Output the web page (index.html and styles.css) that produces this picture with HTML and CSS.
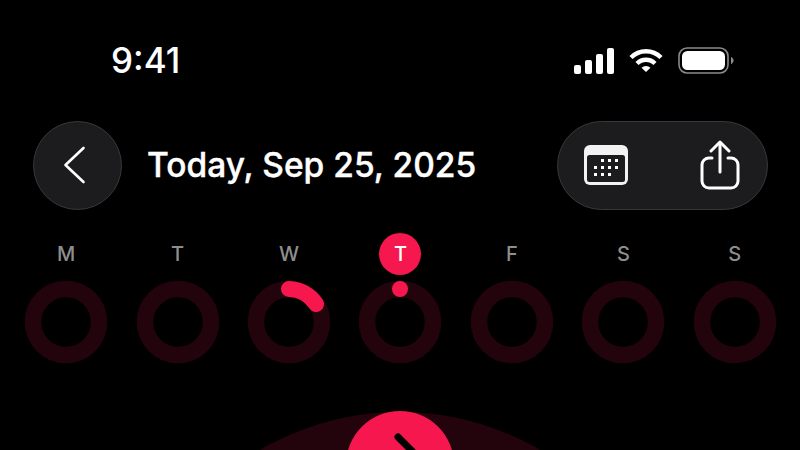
FILE: index.html
```html
<!DOCTYPE html>
<html>
<head>
<meta charset="utf-8">
<title>Today</title>
<link rel="stylesheet" href="styles.css">
</head>
<body>

<div class="status">
  <span class="time">9:41</span>
  <div class="status-icons">
    <svg width="40" height="26" viewBox="0 0 40 26" fill="#fff">
      <rect x="0" y="17" width="7" height="9" rx="2"/>
      <rect x="11" y="12" width="7" height="14" rx="2"/>
      <rect x="22" y="6" width="7" height="20" rx="2"/>
      <rect x="33" y="0" width="7" height="26" rx="2"/>
    </svg>
    <svg width="34" height="25" viewBox="0 0 34 25" fill="none" stroke="#fff" stroke-width="4.4">
      <path d="M2 9.5a21 21 0 0 1 30 0"/>
      <path d="M8 15.5a12.6 12.6 0 0 1 18 0"/>
      <path d="M12.5 19.8l4.5 4.2 4.5-4.2a6.4 6.4 0 0 0-9 0z" fill="#fff" stroke="none"/>
    </svg>
    <svg width="56" height="27" viewBox="0 0 56 27" fill="none">
      <rect x="1" y="1" width="49" height="25" rx="8" stroke="#8a8a8a" stroke-width="1.6"/>
      <rect x="4" y="4" width="43" height="19" rx="5.5" fill="#fff"/>
      <path d="M53 10v7c1.6-.6 2.6-2 2.6-3.5S54.600 10.600 53 10z" fill="#8a8a8a"/>
    </svg>
  </div>
</div>

<div class="toolbar">
  <button class="back">
    <svg width="26" height="40" viewBox="0 0 26 40" fill="none" stroke="#fff" stroke-width="2.6" stroke-linecap="round" stroke-linejoin="round">
      <path d="M21.500 3 3.500 20l18 17"/>
    </svg>
  </button>
  <h1>Today, Sep 25, 2025</h1>
  <div class="actions">
    <svg width="46" height="42" viewBox="0 0 46 42">
      <rect x="1" y="1" width="44" height="40" rx="6" fill="#f2f2f2"/>
      <rect x="4" y="11" width="38" height="27" rx="2.500" fill="#1c1c1e"/>
      <g fill="#fff">
        <rect x="18" y="15" width="3" height="3"/><rect x="25" y="15" width="3" height="3"/><rect x="32" y="15" width="3" height="3"/>
        <rect x="11" y="22" width="3" height="3"/><rect x="18" y="22" width="3" height="3"/><rect x="25" y="22" width="3" height="3"/><rect x="32" y="22" width="3" height="3"/>
        <rect x="11" y="29" width="3" height="3"/><rect x="18" y="29" width="3" height="3"/><rect x="25" y="29" width="3" height="3"/>
      </g>
    </svg>
    <svg width="42" height="50" viewBox="0 0 42 50" fill="none" stroke="#fff" stroke-width="3" stroke-linecap="round" stroke-linejoin="round">
      <path d="M13 18H10a7 7 0 0 0-7 7v16a7 7 0 0 0 7 7h22a7 7 0 0 0 7-7V25a7 7 0 0 0-7-7h-3"/>
      <path d="M21 32V3"/>
      <path d="M12 11 21 2l9 9"/>
    </svg>
  </div>
</div>

<div class="week">
  <div class="day">
    <span class="label">M</span>
    <svg class="ring" viewBox="0 0 84 84"><circle class="track" cx="42" cy="42" r="33"/></svg>
  </div>
  <div class="day">
    <span class="label">T</span>
    <svg class="ring" viewBox="0 0 84 84"><circle class="track" cx="42" cy="42" r="33"/></svg>
  </div>
  <div class="day">
    <span class="label">W</span>
    <svg class="ring" viewBox="0 0 84 84">
      <circle class="track" cx="42" cy="42" r="33"/>
      <path class="progress" d="M42 9A33 33 0 0 1 69 24"/>
    </svg>
  </div>
  <div class="day">
    <span class="label today">T</span>
    <svg class="ring" viewBox="0 0 84 84">
      <circle class="track" cx="42" cy="42" r="33"/>
      <circle class="dot" cx="42" cy="9" r="8"/>
    </svg>
  </div>
  <div class="day">
    <span class="label">F</span>
    <svg class="ring" viewBox="0 0 84 84"><circle class="track" cx="42" cy="42" r="33"/></svg>
  </div>
  <div class="day">
    <span class="label">S</span>
    <svg class="ring" viewBox="0 0 84 84"><circle class="track" cx="42" cy="42" r="33"/></svg>
  </div>
  <div class="day">
    <span class="label">S</span>
    <svg class="ring" viewBox="0 0 84 84"><circle class="track" cx="42" cy="42" r="33"/></svg>
  </div>
</div>

<div class="gauge">
  <svg width="800" height="40" viewBox="0 0 800 40">
    <circle cx="400" cy="280" r="278" fill="#23040d"/>
    <circle cx="400" cy="55" r="54" fill="#f7174f"/>
    <path d="M398 27 430 59" stroke="#000" stroke-width="7" stroke-linecap="round"/>
  </svg>
</div>

</body>
</html>
```

FILE: styles.css
```css
html, body {
    margin: 0;
    height: 450px;
    overflow: hidden;
    background: #000;
    color: #fff;
    font-family: Inter, "Liberation Sans", sans-serif;
}

.status {
    height: 120px;
    padding: 0 66px 0 111px;
    box-sizing: border-box;
    display: flex;
    justify-content: space-between;
    align-items: flex-start;
}
.time {
    margin-top: 40px;
    font-size: 35px;
    line-height: 40px;
    font-weight: 500;
}
.status-icons {
    margin-top: 47px;
    display: flex;
    align-items: center;
    gap: 15px;
}

.toolbar {
    height: 90px;
    padding: 0 32px 0 33px;
    display: flex;
    align-items: center;
}
.back {
    width: 89px;
    height: 89px;
    padding: 0 5px 0 0;
    border: 1.5px solid #383838;
    border-radius: 50%;
    background: #1c1c1e;
    display: flex;
    align-items: center;
    justify-content: center;
}
h1 {
    margin: 0 0 0 25px;
    font-size: 33.500px;
    font-weight: 500;
    -webkit-text-stroke: 0.4px #fff;
    flex: 1;
}
.actions {
    width: 211px;
    height: 89px;
    padding: 0 26px 0 25px;
    box-sizing: border-box;
    border: 1.5px solid #383838;
    border-radius: 45px;
    background: #1c1c1e;
    display: flex;
    align-items: center;
    justify-content: space-between;
}

.week {
    padding: 0 9.500px 0 10.500px;
    display: grid;
    grid-template-columns: repeat(7, 1fr);
}
.day {
    display: flex;
    flex-direction: column;
    align-items: center;
}
.label {
    width: 42px;
    height: 42px;
    margin-top: 23px;
    text-align: center;
    font-size: 20px;
    line-height: 42px;
    font-weight: 500;
    color: #8e8e8e;
}
.label.today {
    border-radius: 50%;
    background: #f7174f;
    color: #fff;
}
.ring {
    width: 84px;
    height: 84px;
    margin-top: 5px;
    display: block;
}
.track {
    fill: none;
    stroke: #23040d;
    stroke-width: 16.500;
}
.progress {
    fill: none;
    stroke: #f7174f;
    stroke-width: 16;
    stroke-linecap: round;
}
.dot {
    fill: #f7174f;
}

.gauge {
    height: 40px;
    margin-top: 46px;
    overflow: hidden;
}
.gauge svg {
    display: block;
}
```
